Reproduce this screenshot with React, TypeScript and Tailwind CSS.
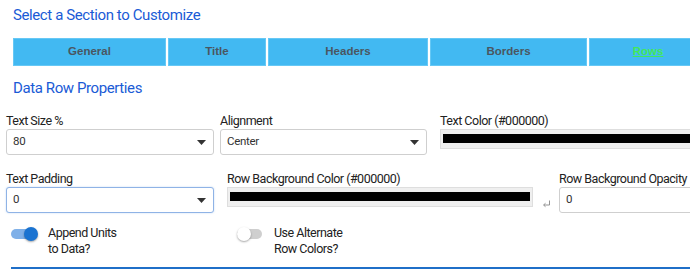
import { useState } from 'react'

const tabs = [
  { label: 'General', w: 'w-[153px]' },
  { label: 'Title', w: 'w-[98px]' },
  { label: 'Headers', w: 'w-[160px]' },
  { label: 'Borders', w: 'w-[157px]' },
  { label: 'Rows', w: 'w-[118px]', active: true },
]

const Caret = () => (
  <svg width="9" height="5" viewBox="0 0 9 5" className="shrink-0">
    <path d="M0 0 L9 0 L4.5 5 Z" fill="#333" />
  </svg>
)

const SelectBox = ({ value, focused }: { value: string; focused?: boolean }) => (
  <div
    className={`flex h-[26px] items-center justify-between rounded-[3px] border bg-white pl-[6px] pr-[7px] text-[11.5px] tracking-[-0.3px] text-[#333] ${
      focused ? 'border-[#8fb3e6] shadow-[0_0_2px_rgba(80,140,220,0.35)]' : 'border-[#cfcfcf]'
    }`}
  >
    <span>{value}</span>
    <Caret />
  </div>
)

const ColorBox = () => (
  <div className="h-[20px] border border-[#dedede] bg-[#efefef] px-[2px] py-[4px]">
    <div className="h-[9px] w-full bg-black" />
  </div>
)

const Label = ({ children }: { children: React.ReactNode }) => (
  <div className="h-[16px] whitespace-nowrap text-[12.5px] leading-[16px] tracking-[-0.5px] text-[#222]">{children}</div>
)

const Toggle = ({ on }: { on: boolean }) => (
  <div className="relative h-[14px] w-[27px] shrink-0">
    <div
      className={`absolute left-0 top-[2px] h-[10px] w-[25px] rounded-full ${on ? 'bg-[#7fb0e8]' : 'bg-[#cfcfcf]'}`}
    />
    <div
      className={`absolute top-0 h-[14px] w-[14px] rounded-full shadow-[0_1px_2px_rgba(0,0,0,0.35)] ${
        on ? 'left-[13px] bg-[#1a73d1]' : 'left-0 bg-white'
      }`}
    />
  </div>
)

export default function App() {
  const [active] = useState('Rows')

  return (
    <div className="h-[272px] w-[690px] overflow-hidden bg-white font-['Roboto',sans-serif]">
      <div className="px-[13px]">
        <div className="pt-[5px] text-[15px] leading-[20px] tracking-[-0.4px] text-[#1a5bd6]">
          Select a Section to Customize
        </div>
        <div className="mt-[13px] flex w-[720px] gap-[2px]">
          {tabs.map((t) => (
            <div
              key={t.label}
              className={`flex h-[28px] shrink-0 items-center justify-center border border-[#66c8f5] bg-[#42b9f2] font-['Liberation_Sans',Arial,sans-serif] text-[11.5px] font-bold ${t.w}`}
            >
              {t.label === active ? (
                <span className="text-[#43e85a] underline">{t.label}</span>
              ) : (
                <span className="text-[#4a5661]">{t.label}</span>
              )}
            </div>
          ))}
        </div>
        <div className="mt-[12px] text-[15px] leading-[20px] tracking-[-0.4px] text-[#1a5bd6]">Data Row Properties</div>
      </div>

      <div className="px-[6px]">
        <div className="mt-[15px] flex w-[760px]">
          <div className="w-[208px] shrink-0">
            <Label>Text Size %</Label>
            <SelectBox value="80" />
          </div>
          <div className="ml-[6px] w-[207px] shrink-0">
            <Label>Alignment</Label>
            <SelectBox value="Center" />
          </div>
          <div className="ml-[13px] w-[300px] shrink-0">
            <Label>Text Color (#000000)</Label>
            <ColorBox />
          </div>
        </div>

        <div className="mt-[16px] flex w-[760px]">
          <div className="w-[208px] shrink-0">
            <Label>Text Padding</Label>
            <SelectBox value="0" focused />
          </div>
          <div className="ml-[13px] w-[306px] shrink-0">
            <Label>Row Background Color (#000000)</Label>
            <ColorBox />
          </div>
          <div className="flex w-[26px] shrink-0 items-end justify-center pb-[5px]">
            <svg width="9" height="8" viewBox="0 0 9 8">
              <path d="M7.5 0.5 V5 H2 M3.5 3.3 L1.5 5 L3.5 6.7" fill="none" stroke="#888" strokeWidth="0.9" />
            </svg>
          </div>
          <div className="w-[150px] shrink-0">
            <Label>Row Background Opacity</Label>
            <div className="flex h-[26px] items-center rounded-[3px] border border-[#cfcfcf] bg-white pl-[6px] text-[11.5px] text-[#333]">
              0
            </div>
          </div>
        </div>

        <div className="mt-[12px] flex">
          <div className="flex w-[220px] shrink-0 items-start">
            <div className="ml-[5px] mt-[1px] pt-[1px]">
              <Toggle on />
            </div>
            <div className="ml-[10px] text-[12.5px] leading-[16px] tracking-[-0.5px] text-[#222]">
              Append Units
              <br />
              to Data?
            </div>
          </div>
          <div className="flex shrink-0 items-start">
            <div className="ml-[11px] mt-[1px] pt-[1px]">
              <Toggle on={false} />
            </div>
            <div className="ml-[10px] text-[12.5px] leading-[16px] tracking-[-0.5px] text-[#222]">
              Use Alternate
              <br />
              Row Colors?
            </div>
          </div>
        </div>
      </div>

      <div className="ml-[11px] mt-[10px] h-[2px] bg-[#1f6fc8]" />
    </div>
  )
}
